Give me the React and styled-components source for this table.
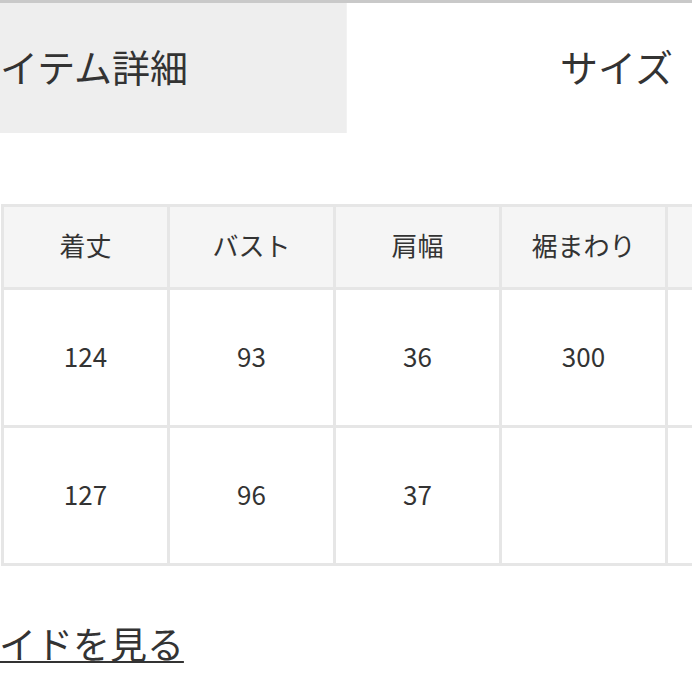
import React from "react";
import styled, { createGlobalStyle } from "styled-components";

const GlobalStyle = createGlobalStyle`
  html, body {
    margin: 0;
    padding: 0;
    background: #ffffff;
    overflow: hidden;
  }
  body {
    font-family: "Noto Sans CJK JP", "Noto Sans", sans-serif;
    color: #333333;
  }
`;

const Page = styled.div`
  width: 692px;
  height: 692px;
  overflow: hidden;
  display: flex;
  flex-direction: column;
`;

const TopRule = styled.div`
  height: 3px;
  background: #c9c9c9;
  flex-shrink: 0;
`;

const TabBar = styled.div`
  display: flex;
  margin-left: -194px;
  height: 130px;
  flex-shrink: 0;
`;

const Tab = styled.div`
  width: 540px;
  flex-shrink: 0;
  display: flex;
  align-items: center;
  justify-content: center;
  padding-bottom: 6px;
  box-sizing: border-box;
  font-size: 38px;
  color: #333333;
  background: ${(p) => (p.$active ? "#eeeeee" : "#ffffff")};
  border-left: ${(p) => (p.$active ? "none" : "1px solid #f2f2f2")};
`;

const SizeTable = styled.table`
  margin-top: 71px;
  margin-left: 1px;
  border-collapse: collapse;
  table-layout: fixed;
  width: 830px;
  flex-shrink: 0;
`;

const Cell = styled.td`
  width: 163px;
  border: 3px solid #e6e6e6;
  text-align: center;
  vertical-align: middle;
  font-size: 26px;
  font-weight: 400;
  color: #333333;
  padding: 0 0 5px;
  height: ${(p) => (p.$head ? "75px" : "130px")};
  background: ${(p) => (p.$head ? "#f5f5f5" : "#ffffff")};
`;

const GuideLink = styled.a`
  display: block;
  margin-top: 51px;
  margin-left: -148px;
  font-size: 37px;
  line-height: 52px;
  color: #333333;
  text-decoration: underline;
  text-decoration-thickness: 2px;
  text-underline-offset: 2px;
  white-space: nowrap;
`;

const headers = ["着丈", "バスト", "肩幅", "裾まわり", ""];
const rows = [
  ["124", "93", "36", "300", ""],
  ["127", "96", "37", "", ""],
];

export default function App() {
  return (
    <Page>
      <GlobalStyle />
      <TopRule />
      <TabBar>
        <Tab $active>アイテム詳細</Tab>
        <Tab>サイズ</Tab>
      </TabBar>
      <SizeTable>
        <tbody>
          <tr>
            {headers.map((h, i) => (
              <Cell as="th" $head key={i}>
                {h}
              </Cell>
            ))}
          </tr>
          {rows.map((r, ri) => (
            <tr key={ri}>
              {r.map((v, i) => (
                <Cell key={i}>{v}</Cell>
              ))}
            </tr>
          ))}
        </tbody>
      </SizeTable>
      <GuideLink href="#">サイズガイドを見る</GuideLink>
    </Page>
  );
}
